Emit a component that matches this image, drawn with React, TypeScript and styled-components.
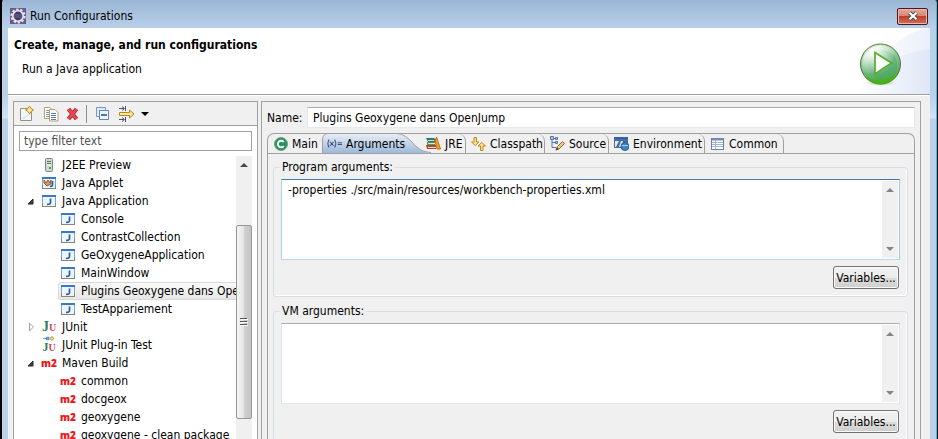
import React, { useState } from "react";
import styled, { createGlobalStyle, css } from "styled-components";

const GlobalStyle = createGlobalStyle`
  * { box-sizing: border-box; }
  body { margin: 0; background: #000; }
  body, button, input, textarea {
    font-family: "DejaVu Sans Condensed", "Open Sans", sans-serif;
    font-size: 12px;
    line-height: 18px;
    color: #000;
  }
`;

const LINE = "#a0a0a0";
const FACE = "#f0f0f0";

const Dialog = styled.div`
  display: flex;
  flex-direction: column;
  height: 100vh;
  overflow: hidden;
  padding: 0 7px 0 6px;
  border: solid #000;
  border-width: 0 1px 0 2px;
  border-radius: 3px 3px 0 0;
  background: linear-gradient(#9ab5d3, #b9d0ea 28px, #b9d1ea 96px, #d3e3f4 118px, #b9d1ea 119px);
  box-shadow: inset -1px 0 0 #2fc4ea;
`;

const TitleBar = styled.header`
  display: flex;
  flex: none;
  align-items: center;
  gap: 4px;
  height: 28px;
  padding: 4px 2px 0 2px;
`;

const TitleText = styled.span`
  flex: 1;
`;

const CloseButton = styled.button`
  display: flex;
  align-items: center;
  justify-content: center;
  width: 31px;
  height: 17px;
  padding: 0;
  border: 1px solid #4b1722;
  border-radius: 2px;
  background: linear-gradient(#e8a898, #d88572 46%, #bd3f26 50%, #d0705a);
  box-shadow: inset 0 0 0 1px #e9b9ae;
`;

const Banner = styled.section`
  display: flex;
  flex: none;
  justify-content: space-between;
  height: 67px;
  overflow: hidden;
  border-bottom: 1px solid ${LINE};
  background: #fff;
`;

const BannerText = styled.div`
  padding: 8px 6px;
`;

const BannerTitle = styled.h1`
  margin: 0;
  font-size: 12px;
  line-height: 18px;
  font-weight: 700;
`;

const BannerMessage = styled.p`
  margin: 6px 0 0 8px;
`;

const Body = styled.main`
  display: flex;
  flex: 1;
  gap: 3px;
  min-height: 0;
  padding: 5px 9px 0 5px;
  border-top: 1px solid #fff;
  background: ${FACE};
`;

const ConfigPanel = styled.section`
  display: flex;
  flex: none;
  flex-direction: column;
  width: 245px;
  border: 1px solid ${LINE};
  border-bottom: 0;
  background: #fff;
`;

const ToolBar = styled.div`
  display: flex;
  flex: none;
  align-items: center;
  height: 24px;
  padding-left: 3px;
  border-bottom: 1px solid ${LINE};
  background: ${FACE};
`;

const ToolButton = styled.button<{ $wide?: boolean }>`
  display: flex;
  align-items: center;
  justify-content: flex-start;
  width: ${(p) => (p.$wide ? 36 : 23)}px;
  height: 22px;
  padding: 0 3px;
  border: 0;
  background: none;
`;

const ToolDivider = styled.span`
  width: 1px;
  height: 18px;
  margin: 0 6px 0 0;
  background: #8f8f8f;
`;

const FilterInput = styled.input`
  flex: none;
  height: 20px;
  margin: 5px;
  padding: 0 4px;
  border: 1px solid ${LINE};
  border-radius: 0;
  background: #fff;
  outline: none;
  &::placeholder { color: #505050; opacity: 1; }
`;

const TreeArea = styled.div`
  display: flex;
  flex: 1;
  min-height: 0;
  margin: 0 5px;
`;

const Tree = styled.ul`
  flex: 1;
  min-width: 0;
  margin: 0;
  padding: 0;
  overflow: hidden;
  list-style: none;
`;

const TreeRow = styled.li<{ $level: number }>`
  display: flex;
  height: 18px;
  padding-left: ${(p) => (p.$level === 1 ? 0 : 39)}px;
`;

const Expander = styled.button`
  flex: none;
  display: flex;
  align-items: center;
  width: 20px;
  padding: 0 0 0 8px;
  border: 0;
  background: none;
`;

const ExpanderGap = styled.span`
  flex: none;
  width: 20px;
`;

const TreeItem = styled.span<{ $selected?: boolean }>`
  display: flex;
  flex: ${(p) => (p.$selected ? "none" : "1")};
  align-items: center;
  gap: 6px;
  padding: 0 3px;
  white-space: nowrap;
  ${(p) =>
    p.$selected &&
    css`
      border-radius: 3px;
      background: linear-gradient(#fafafa, #e6e6e6);
      box-shadow: inset 0 0 0 1px #d9d9d9;
    `}
`;

const IconSlot = styled.span`
  display: flex;
  flex: none;
  align-items: center;
  justify-content: center;
  width: 14px;
  height: 18px;
`;

const ScrollTrack = styled.div`
  display: flex;
  flex: none;
  flex-direction: column;
  width: 16px;
  background: #f0f0f0;
`;

const ScrollArrow = styled.button`
  display: flex;
  flex: none;
  align-items: center;
  justify-content: center;
  height: 18px;
  padding: 0;
  border: 0;
  background: none;
`;

const ScrollThumb = styled.div`
  display: flex;
  flex: none;
  align-items: center;
  justify-content: center;
  height: 194px;
  margin-top: 51px;
  border: 1px solid #979797;
  border-radius: 2px;
  background: linear-gradient(90deg, #f5f5f5, #e6e6e6 45%, #cfcfcf 55%, #c4c4c4);
`;

const DetailPanel = styled.section`
  display: flex;
  flex: 1;
  flex-direction: column;
  min-width: 0;
  padding: 5px 5px 0;
  border: 1px solid ${LINE};
  border-bottom: 0;
`;

const NameRow = styled.div`
  display: flex;
  flex: none;
  align-items: center;
  gap: 4px;
`;

const NameLabel = styled.label`
  flex: none;
  width: 36px;
  white-space: nowrap;
`;

const NameInput = styled.input`
  flex: 1;
  min-width: 0;
  height: 21px;
  padding: 0 5px;
  border: 1px solid #e3e9ef;
  border-top-color: #abadb3;
  background: #fff;
  outline: none;
`;

const TabFolder = styled.div`
  display: flex;
  flex: 1;
  flex-direction: column;
  min-height: 0;
  margin-top: 5px;
  border: 1px solid ${LINE};
  border-bottom: 0;
  border-radius: 7px 7px 0 0;
`;

const TabStrip = styled.div`
  display: flex;
  flex: none;
  height: 20px;
  border-bottom: 1px solid ${LINE};
`;

const TabButton = styled.button<{ $width: number; $plain?: boolean }>`
  position: relative;
  display: flex;
  flex: none;
  align-items: center;
  gap: 4px;
  width: ${(p) => p.$width}px;
  height: 19px;
  padding: 0 0 0 5px;
  border: solid ${LINE};
  border-width: 0 ${(p) => (p.$plain ? 0 : 1)}px 0 0;
  border-radius: 0 ${(p) => (p.$plain ? 0 : 7)}px 0 0;
  background: none;
  white-space: nowrap;
`;

const TabShape = styled.svg`
  position: absolute;
  left: 0;
  top: -1px;
`;

const TabLabel = styled.span`
  position: relative;
`;

const TabIcon = styled.span`
  position: relative;
  display: flex;
  flex: none;
  align-items: center;
  justify-content: center;
  width: 15px;
  height: 16px;
`;

const TabPage = styled.div`
  display: flex;
  flex-direction: column;
  gap: 5px;
  padding: 4px 6px 0 5px;
`;

const Group = styled.fieldset`
  display: flex;
  flex-direction: column;
  align-items: flex-end;
  gap: 6px;
  min-width: 0;
  margin: 0;
  padding: 3px 7px 7px;
  border: 1px solid #d5dfe5;
  border-radius: 3px;
  box-shadow: inset -1px -1px 0 #fff;
`;

const GroupTitle = styled.legend`
  height: 18px;
  padding: 0 2px;
  margin-left: -1px;
`;

const EditorBox = styled.div<{ $focused?: boolean }>`
  display: flex;
  width: 100%;
  height: 81px;
  padding: 1px;
  border: 1px solid;
  border-color: ${(p) => (p.$focused ? "#3d7bad #a4c9e3 #b7d9ed #b5cfe7" : "#abadb3 #e2e3ea #e3e9ef #e2e3ea")};
  background: #fff;
`;

const Editor = styled.textarea`
  flex: 1;
  min-width: 0;
  padding: 0 5px;
  border: 0;
  overflow: hidden;
  resize: none;
  background: none;
  outline: none;
`;

const EditorScroll = styled(ScrollTrack)`
  justify-content: space-between;
`;

const PushButton = styled.button`
  width: 66px;
  height: 23px;
  margin-right: 1px;
  padding: 0;
  border: 1px solid #707070;
  border-radius: 3px;
  background: linear-gradient(#f2f2f2, #ebebeb 50%, #dddddd 51%, #cfcfcf);
  box-shadow: inset 0 0 0 1px #fbfbfb;
  white-space: nowrap;
`;

const MavenMark = styled.span`
  font-family: "Open Sans", sans-serif;
  font-size: 10px;
  font-weight: 800;
  color: #f01414;
`;

const JUnitMark = styled.span<{ $small?: boolean }>`
  display: flex;
  align-items: baseline;
  font-family: "Liberation Serif", serif;
  font-size: ${(p) => (p.$small ? 12 : 14)}px;
  font-weight: 700;
  line-height: ${(p) => (p.$small ? 12 : 14)}px;
  color: #27825a;
`;

const JUnitU = styled.span`
  font-size: 10px;
  color: #cf4a58;
`;

const PluginMark = styled.span`
  display: flex;
  flex-direction: column;
  align-items: center;
`;

const EclipseIcon = () => (
  <svg width="16" height="16" viewBox="0 0 16 16">
    <rect width="16" height="16" fill="#6b5a8e" />
    <circle cx="8" cy="8" r="6.6" fill="none" stroke="#e8e4ea" strokeWidth="2" strokeDasharray="2.4 1.75" />
    <circle cx="8" cy="8" r="5.2" fill="#423a68" stroke="#eeeaf0" strokeWidth="1.6" />
    <path d="M4 7h8M4 9h8" stroke="#6f6794" />
  </svg>
);

const CloseIcon = () => (
  <svg width="12" height="10" viewBox="0 0 12 10">
    <path d="M2.5 1.8 9.5 8.2M9.5 1.8 2.5 8.2" stroke="#4b4b5c" strokeWidth="4.2" />
    <path d="M2.5 1.8 9.5 8.2M9.5 1.8 2.5 8.2" stroke="#fff" strokeWidth="2.2" />
  </svg>
);

const RunArt = () => (
  <svg width="90" height="66" viewBox="0 0 90 66">
    <defs>
      <linearGradient id="sweep" x1="0" x2="1">
        <stop offset="0" stopColor="#fff" />
        <stop offset="1" stopColor="#dce5f6" />
      </linearGradient>
      <linearGradient id="ball" x1="0.2" y1="0" x2="0.5" y2="1">
        <stop offset="0" stopColor="#e9f6df" />
        <stop offset="0.45" stopColor="#85c393" />
        <stop offset="0.78" stopColor="#5fae6c" />
        <stop offset="1" stopColor="#3fae14" />
      </linearGradient>
      <radialGradient id="shine" cx="0.3" cy="0.2" r="0.6">
        <stop offset="0" stopColor="#fff" />
        <stop offset="1" stopColor="#fff" stopOpacity="0" />
      </radialGradient>
      <radialGradient id="shade">
        <stop offset="0" stopColor="#8a8fa5" />
        <stop offset="1" stopColor="#fff" stopOpacity="0" />
      </radialGradient>
    </defs>
    <path d="M22 66C42 24 60 4 90 0V66Z" fill="url(#sweep)" opacity="0.6" />
    <path d="M15 66C35 38 60 25 90 21V66Z" fill="url(#sweep)" opacity="0.8" />
    <ellipse cx="41" cy="55" rx="20" ry="3.5" fill="url(#shade)" />
    <circle cx="40.5" cy="36" r="20" fill="url(#ball)" stroke="#56733f" />
    <circle cx="43" cy="37" r="14.5" fill="#4ca56c" opacity="0.35" />
    <path d="M24 47A19 19 0 0 0 57 47A28 28 0 0 1 24 47" fill="#48b511" opacity="0.7" />
    <circle cx="40.5" cy="36" r="18.5" fill="url(#shine)" />
    <path d="M35 24.500V46L51.500 35Z" fill="#fff" stroke="#55ad2d" strokeWidth="1.7" />
  </svg>
);

const NewIcon = () => (
  <svg width="14" height="16" viewBox="0 0 14 16">
    <path d="M.5 2.500H8L11.500 6V14.500H.5Z" fill="#f4f8fc" stroke="#9b8f78" />
    <path d="M2 13 10 8" stroke="#dce8f2" strokeWidth="2" />
    <path d="M9.500 0 11 2.500 13.500 4 11 5.500 9.500 8 8 5.500 5.500 4 8 2.500Z" fill="#fbe9a0" stroke="#b98b1c" />
  </svg>
);

const CopyIcon = () => (
  <svg width="16" height="16" viewBox="0 0 16 16">
    <path d="M1.500 1.500H7L9.500 4V12.500H1.500Z" fill="#fff" stroke="#b7a16a" />
    <path d="M3 4.500H7M3 6.500H7M3 8.500H7M3 10.500H7" stroke="#7b98c4" />
    <path d="M6.500 3.500H12L15 6.500V15H6.500Z" fill="#fff" stroke="#b7a16a" />
    <path d="M8 7.500H13M8 9.500H13M8 11.500H13M8 13.500H13" stroke="#5a80b6" />
  </svg>
);

const DeleteIcon = () => (
  <svg width="14" height="14" viewBox="0 0 14 14">
    <path d="M2.500 2 10.500 12M10.500 2 2.500 12" stroke="#a9202b" strokeWidth="4.2" />
    <path d="M2.500 2 10.500 12M10.500 2 2.500 12" stroke="#e9484e" strokeWidth="2.8" />
  </svg>
);

const CollapseIcon = () => (
  <svg width="14" height="14" viewBox="0 0 14 14">
    <path d="M.5 9.500V.5H9.500V3.500H3.500V9.500Z" fill="#dcebf7" stroke="#8097bd" />
    <path d="M3.500 3.500H12.500V12.500H3.500Z" fill="#eaf6fd" stroke="#6985b4" />
    <path d="M5 8H11" stroke="#1d4b8c" strokeWidth="1.5" />
  </svg>
);

const FilterIcon = () => (
  <svg width="30" height="16" viewBox="0 0 30 16">
    <path d="M0 2.500H5M0 13.500H5M3 .5 5.500 2.500 3 4.500M3 11.500 5.500 13.500 3 15.500M6.500 0V5M6.500 11V16" fill="none" stroke="#46566c" />
    <path d="M.5 6.500H10.500V4L15 8 10.500 12V9.500H.5Z" fill="#fbe49d" stroke="#b8861f" />
    <path d="M22 6H30L26 10Z" fill="#000" />
  </svg>
);

const ServerIcon = () => (
  <svg width="14" height="16" viewBox="0 0 14 16">
    <rect x="3.5" y="1.5" width="7" height="13" rx="1" fill="#cfd8d2" stroke="#7c877f" />
    <path d="M5 4.500H9M5 6.500H9" stroke="#4f7c5a" />
    <path d="M5 8H9" stroke="#fff" />
    <rect x="7" y="10" width="2" height="2" fill="#3ca542" />
  </svg>
);

const JavaIcon = ({ applet }: { applet?: boolean }) => (
  <svg width="14" height="12" viewBox="0 0 14 12">
    <rect x=".5" y=".5" width="13" height="11" fill="#edf5fc" stroke="#8a8671" />
    <path d="M0 1H14" stroke="#3b78c2" strokeWidth="2" />
    <path d="M.5 2V8M13.500 2V8" stroke="#78a6d8" />
    {applet && <path d="M2 3 4 6 6 3 8 6 9 3V7L5 9 2 6Z" fill="#d69a5c" stroke="#9a5b2c" />}
    <path d={applet ? "M10.500 4V8Q10.500 9.500 8 9.500" : "M8.500 3.500V7.500Q8.500 9.500 5 9.300"} fill="none" stroke="#2a5fa5" strokeWidth="1.7" />
  </svg>
);

const PlugIcon = () => (
  <svg width="14" height="5" viewBox="0 0 14 6">
    <path d="M0 3H4M4 1.500H7V4.500H4Z" fill="#88b1e2" stroke="#4577b8" />
    <path d="M8 3 10.500.6 13 3 10.500 5.400Z" fill="#f8dc84" stroke="#a98422" />
  </svg>
);

const ArrowIcon = ({ down, dim }: { down?: boolean; dim?: boolean }) => (
  <svg width="8" height="4" viewBox="0 0 8 4">
    <path d={down ? "M0 0H8L4 4Z" : "M0 4H8L4 0Z"} fill={dim ? "#838383" : "#4a4a4a"} />
  </svg>
);

const GripIcon = () => (
  <svg width="8" height="8" viewBox="0 0 8 8">
    <path d="M0 .5H7M0 3.500H7M0 6.500H7" stroke="#555" />
    <path d="M1 1.500H8M1 4.500H8M1 7.500H8" stroke="#fff" />
  </svg>
);

const OpenedIcon = () => (
  <svg width="8" height="8" viewBox="0 0 8 8">
    <path d="M6 2V7H1Z" fill="#404040" stroke="#262626" />
  </svg>
);

const ClosedIcon = () => (
  <svg width="8" height="10" viewBox="0 0 8 10">
    <path d="M2.500 1.200V8.800L6.500 5Z" fill="#fff" stroke="#a0a0a0" />
  </svg>
);

const ClassIcon = () => (
  <svg width="14" height="14" viewBox="0 0 14 14">
    <circle cx="7" cy="7" r="6.5" fill="#2f8f5e" stroke="#66a884" />
    <path d="M9.800 5A3.300 3.300 0 1 0 9.800 9" fill="none" stroke="#fff" strokeWidth="1.9" />
  </svg>
);

const VariableIcon = () => (
  <svg width="17" height="12" viewBox="0 0 17 12">
    <path d="M2.500 1Q-.5 5.500 2.500 10M8.500 1Q11.500 5.500 8.500 10M3.500 3.500 7.500 8M7.500 3.500 3.500 8M12 4.500H17M12 6.500H17" fill="none" stroke="#3b5480" strokeWidth="1.2" />
  </svg>
);

const BooksIcon = () => (
  <svg width="15" height="13" viewBox="0 0 15 13">
    <path d="M0 1H8L10 3V5H2Z" fill="#27747c" />
    <path d="M1 5H9V8H1Z" fill="#4f9a6a" />
    <path d="M0 8H10V12H1Z" fill="#b04a32" />
    <path d="M2 6.500H9M2 10.500H10M2 3.500H8" stroke="#ecdcc0" />
    <path d="M10.500 0 14.500 12H11L9 4Z" fill="#eda02c" stroke="#bd6f16" />
  </svg>
);

const ClasspathIcon = () => (
  <svg width="15" height="14" viewBox="0 0 15 14">
    <path d="M3 .5H5.500V5H8L4.250 8.500.5 5H3Z" fill="#fbe28c" stroke="#bb8a20" />
    <path d="M9.500 13.500H12V9H14.500L10.750 5.500 7 9H9.500Z" fill="#fbe28c" stroke="#bb8a20" />
  </svg>
);

const SourceIcon = () => (
  <svg width="15" height="15" viewBox="0 0 15 15">
    <path d="M2 2V11.500H6M2 6.500H6M4 2.500H6" fill="none" stroke="#4e74ac" />
    <path d="M.5.5H3.500V3.500H.5ZM5.500 1.500H7.500V3.500H5.500ZM5.500 5.500H7.500V7.500H5.500Z" fill="#b9d0ee" stroke="#4e74ac" />
    <path d="M6 14 7.500 10.500 12.500 5.500 14.500 7.500 9 13Z" fill="#efc78a" stroke="#8f6637" />
    <path d="M5.500 14.500 7 11.500 8.500 13Z" fill="#3a3028" />
  </svg>
);

const EnvironmentIcon = () => (
  <svg width="15" height="14" viewBox="0 0 15 14">
    <path d="M0 0H14V11H0Z" fill="#4a6c96" />
    <path d="M0 1H14" stroke="#2f63b2" strokeWidth="2" />
    <path d="M1 4H5L2 10H1ZM7 4H9L7 10H5Z" fill="#e3e9ef" />
    <circle cx="11" cy="9.5" r="4" fill="#3f86c5" stroke="#2c619c" />
    <path d="M8 8.500H14" stroke="#a7d0ed" />
  </svg>
);

const CommonIcon = () => (
  <svg width="13" height="12" viewBox="0 0 13 12">
    <rect x=".5" y=".5" width="12" height="11" fill="#fff" stroke="#6d7ea6" />
    <path d="M1 1.500H12" stroke="#7b8db5" strokeWidth="2" />
    <path d="M1 4.500H12M1 6.500H12M1 8.500H12M4.500 2V11" stroke="#a4b3cf" />
  </svg>
);

const JUnitIcon = () => (
  <JUnitMark aria-hidden>
    J<JUnitU>U</JUnitU>
  </JUnitMark>
);

const JUnitPluginIcon = () => (
  <PluginMark aria-hidden>
    <PlugIcon />
    <JUnitMark $small>
      J<JUnitU>U</JUnitU>
    </JUnitMark>
  </PluginMark>
);

const icons = {
  server: <ServerIcon />,
  applet: <JavaIcon applet />,
  java: <JavaIcon />,
  junit: <JUnitIcon />,
  plugin: <JUnitPluginIcon />,
  maven: <MavenMark aria-hidden>m2</MavenMark>,
};

type Node = { label: string; icon: keyof typeof icons; level: 1 | 2; open?: boolean };

const nodes: Node[] = [
  { label: "J2EE Preview", icon: "server", level: 1 },
  { label: "Java Applet", icon: "applet", level: 1 },
  { label: "Java Application", icon: "java", level: 1, open: true },
  { label: "Console", icon: "java", level: 2 },
  { label: "ContrastCollection", icon: "java", level: 2 },
  { label: "GeOxygeneApplication", icon: "java", level: 2 },
  { label: "MainWindow", icon: "java", level: 2 },
  { label: "Plugins Geoxygene dans OpenJump", icon: "java", level: 2 },
  { label: "TestAppariement", icon: "java", level: 2 },
  { label: "JUnit", icon: "junit", level: 1, open: false },
  { label: "JUnit Plug-in Test", icon: "plugin", level: 1 },
  { label: "Maven Build", icon: "maven", level: 1, open: true },
  { label: "common", icon: "maven", level: 2 },
  { label: "docgeox", icon: "maven", level: 2 },
  { label: "geoxygene", icon: "maven", level: 2 },
  { label: "geoxygene - clean package", icon: "maven", level: 2 },
];

const tabs = [
  { label: "Main", icon: <ClassIcon />, width: 54 },
  { label: "Arguments", icon: <VariableIcon />, width: 99 },
  { label: "JRE", icon: <BooksIcon />, width: 45 },
  { label: "Classpath", icon: <ClasspathIcon />, width: 79 },
  { label: "Source", icon: <SourceIcon />, width: 64 },
  { label: "Environment", icon: <EnvironmentIcon />, width: 96 },
  { label: "Common", icon: <CommonIcon />, width: 79 },
];

const SelectedShape = () => (
  <TabShape width="112" height="20" viewBox="0 0 112 20" aria-hidden>
    <defs>
      <linearGradient id="tab" x1="0" x2="0" y1="0" y2="1">
        <stop offset="0" stopColor="#e9eff6" />
        <stop offset="1" stopColor="#9db9da" />
      </linearGradient>
    </defs>
    <path d="M0 20V6Q1 1 6 .5H74C90 .5 91 19.500 109 20Z" fill="url(#tab)" />
    <path d="M.5 20V6Q1 1 6 .5H74C90 .5 91 19.500 109 19.500" fill="none" stroke={LINE} />
  </TabShape>
);

function ArgumentsGroup({ title, initial, focused }: { title: string; initial: string; focused?: boolean }) {
  const [text, setText] = useState(initial);
  return (
    <Group>
      <GroupTitle>{title}</GroupTitle>
      <EditorBox $focused={focused}>
        <Editor aria-label={title} value={text} spellCheck={false} onChange={(e) => setText(e.target.value)} />
        <EditorScroll>
          <ScrollArrow aria-label="Scroll up"><ArrowIcon dim /></ScrollArrow>
          <ScrollArrow aria-label="Scroll down"><ArrowIcon down dim /></ScrollArrow>
        </EditorScroll>
      </EditorBox>
      <PushButton>Variables...</PushButton>
    </Group>
  );
}

export default function App() {
  const [name, setName] = useState("Plugins Geoxygene dans OpenJump");
  const [filter, setFilter] = useState("");
  return (
    <>
      <GlobalStyle />
      <Dialog role="dialog" aria-label="Run Configurations">
        <TitleBar>
          <EclipseIcon />
          <TitleText>Run Configurations</TitleText>
          <CloseButton aria-label="Close"><CloseIcon /></CloseButton>
        </TitleBar>
        <Banner>
          <BannerText>
            <BannerTitle>Create, manage, and run configurations</BannerTitle>
            <BannerMessage>Run a Java application</BannerMessage>
          </BannerText>
          <RunArt />
        </Banner>
        <Body>
          <ConfigPanel>
            <ToolBar>
              <ToolButton aria-label="New"><NewIcon /></ToolButton>
              <ToolButton aria-label="Duplicate"><CopyIcon /></ToolButton>
              <ToolButton aria-label="Delete"><DeleteIcon /></ToolButton>
              <ToolDivider />
              <ToolButton aria-label="Collapse all"><CollapseIcon /></ToolButton>
              <ToolButton aria-label="Filter" $wide><FilterIcon /></ToolButton>
            </ToolBar>
            <FilterInput
              aria-label="Filter"
              placeholder="type filter text"
              value={filter}
              onChange={(e) => setFilter(e.target.value)}
            />
            <TreeArea>
              <Tree role="tree">
                {nodes.map((n) => (
                  <TreeRow key={n.label} $level={n.level} role="treeitem">
                    {n.level === 1 &&
                      (n.open === undefined ? (
                        <ExpanderGap />
                      ) : (
                        <Expander aria-label={`Toggle ${n.label}`}>{n.open ? <OpenedIcon /> : <ClosedIcon />}</Expander>
                      ))}
                    <TreeItem $selected={n.label === "Plugins Geoxygene dans OpenJump"}>
                      <IconSlot>{icons[n.icon]}</IconSlot>
                      {n.label}
                    </TreeItem>
                  </TreeRow>
                ))}
              </Tree>
              <ScrollTrack>
                <ScrollArrow aria-label="Scroll up"><ArrowIcon /></ScrollArrow>
                <ScrollThumb><GripIcon /></ScrollThumb>
              </ScrollTrack>
            </TreeArea>
          </ConfigPanel>
          <DetailPanel>
            <NameRow>
              <NameLabel htmlFor="name">Name:</NameLabel>
              <NameInput id="name" value={name} onChange={(e) => setName(e.target.value)} />
            </NameRow>
            <TabFolder>
              <TabStrip role="tablist">
                {tabs.map((t) => {
                  const selected = t.label === "Arguments";
                  return (
                    <TabButton
                      key={t.label}
                      role="tab"
                      aria-selected={selected}
                      $width={t.width}
                      $plain={selected || t.label === "Main"}
                    >
                      {selected && <SelectedShape />}
                      <TabIcon>{t.icon}</TabIcon>
                      <TabLabel>{t.label}</TabLabel>
                    </TabButton>
                  );
                })}
              </TabStrip>
              <TabPage role="tabpanel">
                <ArgumentsGroup
                  title="Program arguments:"
                  initial="-properties ./src/main/resources/workbench-properties.xml"
                  focused
                />
                <ArgumentsGroup title="VM arguments:" initial="" />
              </TabPage>
            </TabFolder>
          </DetailPanel>
        </Body>
      </Dialog>
    </>
  );
}
